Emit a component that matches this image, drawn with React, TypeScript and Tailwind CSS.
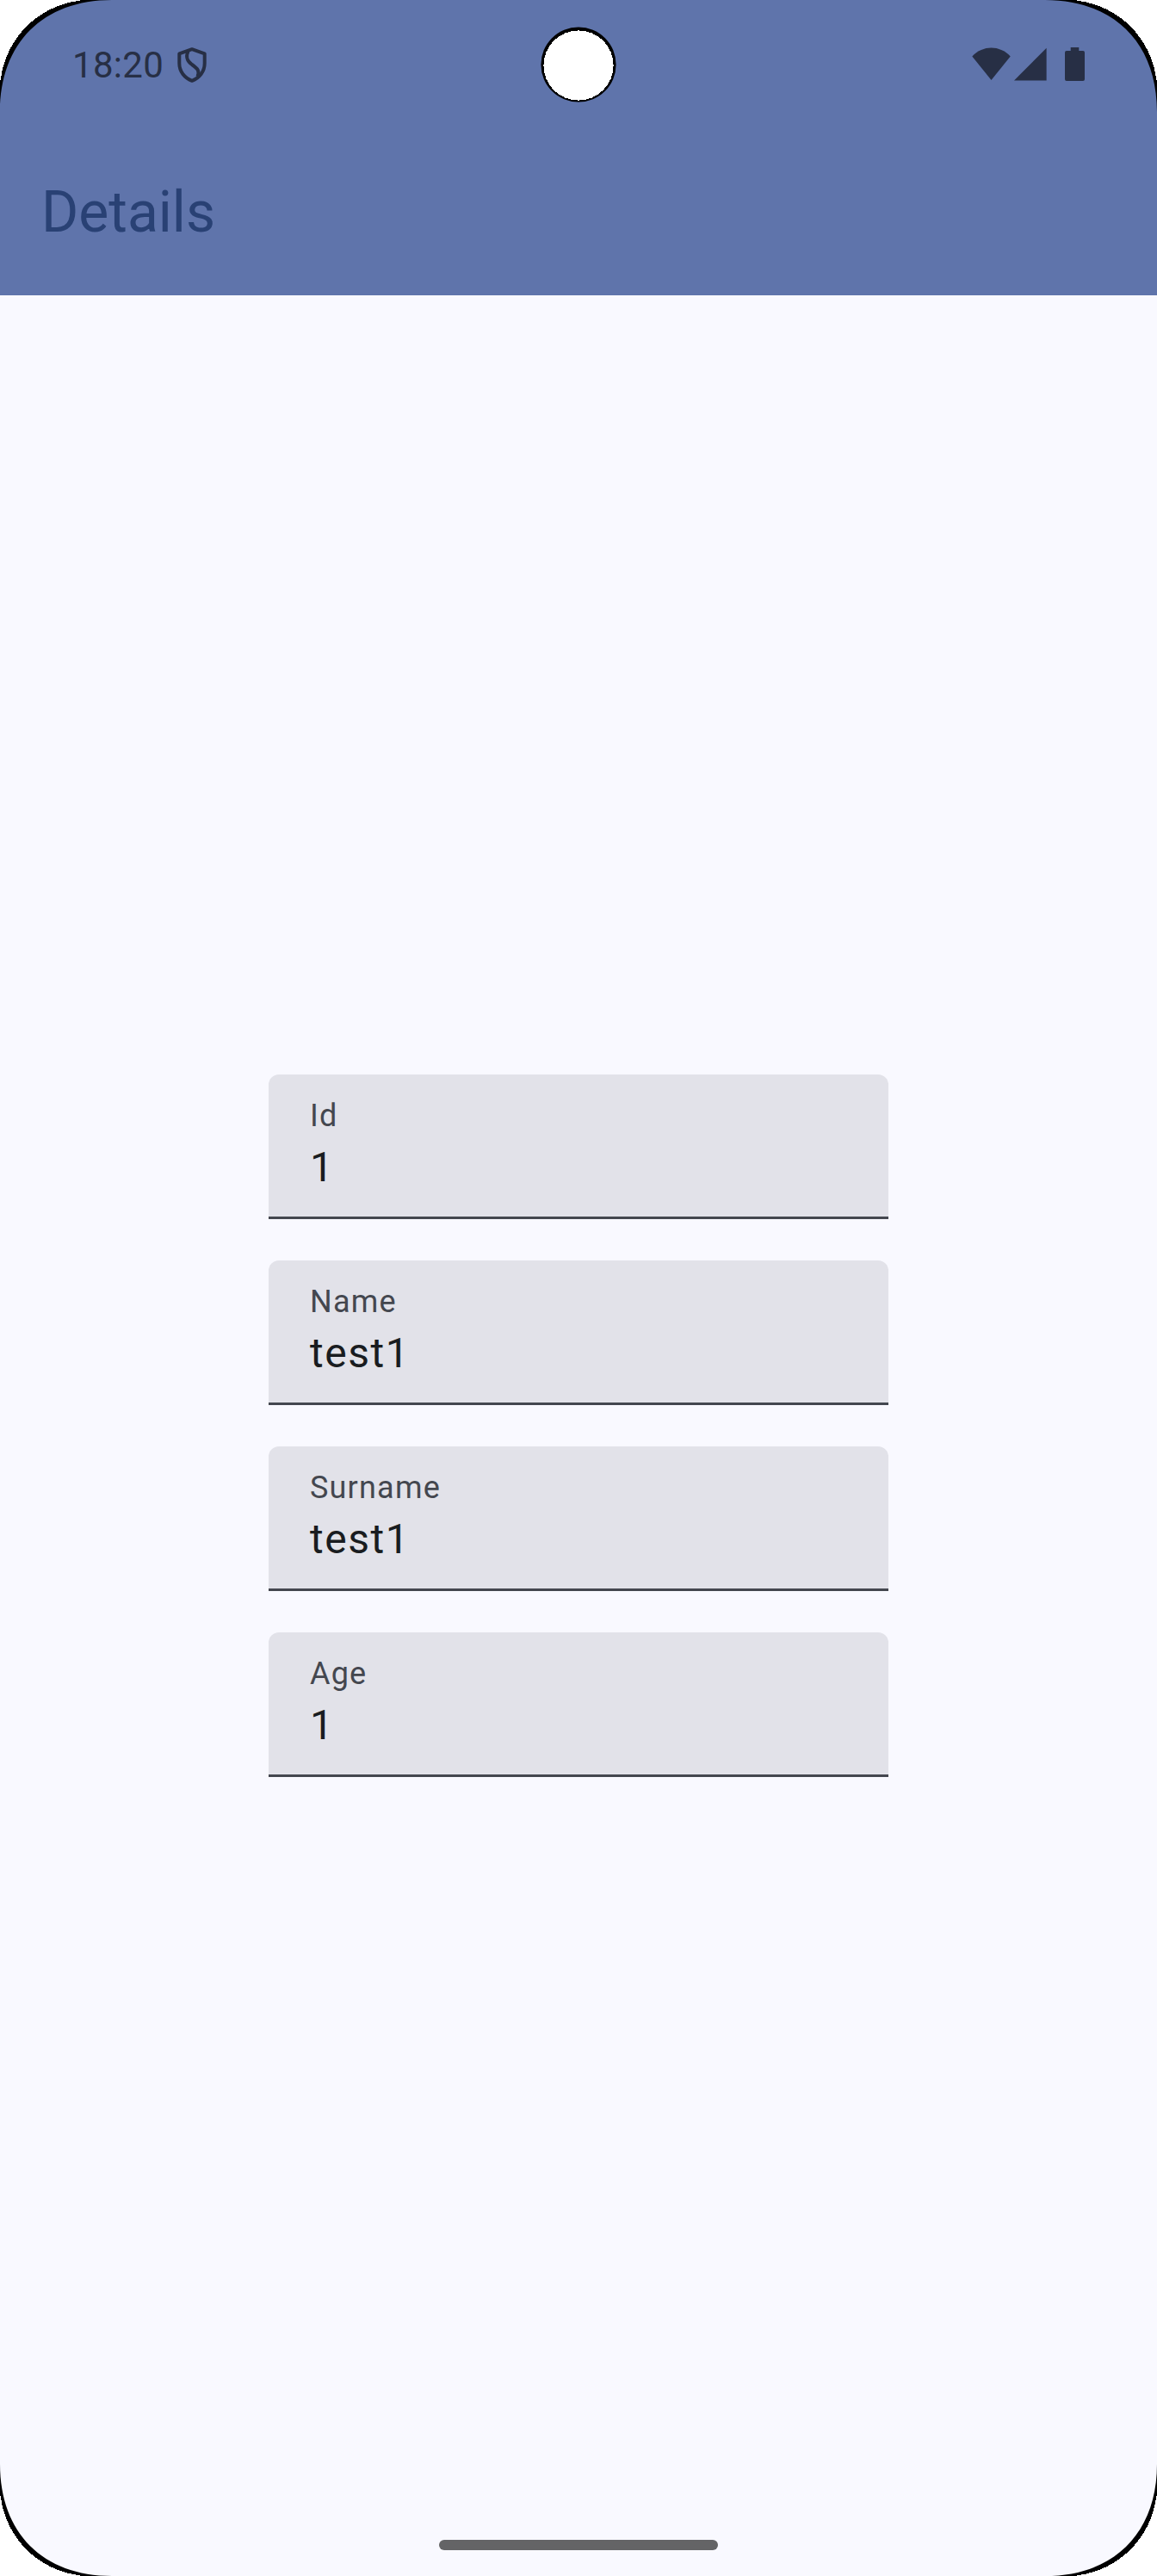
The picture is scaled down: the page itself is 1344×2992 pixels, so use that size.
const fields = [
  { label: 'Id', value: '1' },
  { label: 'Name', value: 'test1' },
  { label: 'Surname', value: 'test1' },
  { label: 'Age', value: '1' },
];

function Corner({ className }: { className: string }) {
  return (
    <svg className={`absolute size-[136px] ${className}`} viewBox="0 0 136 136" aria-hidden="true">
      <path d="M0 0H130C50 0 0 50 0 130Z" fill="#000" />
      <path d="M0 0H93V.7A105 105 0 0 0 .7 93H0Z" fill="#fff" shapeRendering="crispEdges" />
    </svg>
  );
}

function ShieldIcon() {
  return (
    <svg className="h-[42px] w-[34px]" viewBox="0 0 34 42" fill="none" stroke="#272f45" strokeWidth="4" strokeLinejoin="round" aria-hidden="true">
      <path d="M17 3.2L2.3 8.4V19.5C2.3 29 8.3 36.5 17 39.8C25.7 36.5 31.7 29 31.7 19.5V8.4Z" />
      <path d="M12.5 5.5C9.5 12 11 16.5 17 21C24 26 26 28.5 23.5 35" />
    </svg>
  );
}

function StatusIcons() {
  return (
    <svg className="h-[42px] w-[132px]" viewBox="0 0 132 42" fill="#272f45" aria-hidden="true">
      <path d="M.3 11.5C13 -1.7 32 -1.7 44.7 11.5L22.5 39Z" />
      <path d="M49 39.4L86.6 1.7V39.4Z" />
      <path d="M114.7 1H124.3V5H129Q131 5 131 7V38Q131 40 129 40H110Q108 40 108 38V7Q108 5 110 5H114.7Z" />
    </svg>
  );
}

export default function App() {
  return (
    <div className="relative flex h-[2992px] w-[1344px] flex-col overflow-hidden bg-[#f9f9ff] font-[Roboto,sans-serif]">
      <header className="flex h-[343px] flex-col bg-[#5f74ab]">
        <div className="flex h-[150px] items-center justify-between pr-[83px] pl-[84px]">
          <div className="flex items-center">
            <span className="w-[122px] pt-0.5 text-[42px] leading-[48px] tracking-[0.3px] whitespace-nowrap text-[#272f45]">18:20</span>
            <ShieldIcon />
          </div>
          <StatusIcons />
        </div>
        <h1 className="mt-[52px] pl-[48px] text-[66px] leading-[90px] font-normal text-[#294174]">Details</h1>
      </header>
      <main className="mt-[905px] flex flex-col items-center gap-12">
        {fields.map((f) => (
          <label key={f.label} className="flex h-[168px] w-[720px] flex-col rounded-t-[12px] bg-[#e2e2e9] px-12 pt-6">
            <span className="h-12 text-[36px] leading-[48px] tracking-[1.2px] text-[#44474f]">{f.label}</span>
            <span className="h-[72px] text-[48px] leading-[72px] tracking-[1.5px] text-[#191c20]">{f.value}</span>
            <span className="-mx-12 mt-auto h-[3px] bg-[#44474f]" />
          </label>
        ))}
      </main>
      <div className="mt-auto mb-[30px] h-3 w-[324px] self-center rounded-full bg-[#646466]" />
      <svg className="absolute top-[30px] left-[627px] size-[90px]" viewBox="0 0 90 90" aria-hidden="true">
        <circle cx="45" cy="45" r="43.6" fill="#000" />
        <circle cx="45" cy="46" r="40.6" fill="#fff" shapeRendering="crispEdges" />
      </svg>
      <Corner className="top-0 left-0" />
      <Corner className="top-0 right-0 -scale-x-100" />
      <Corner className="bottom-0 left-0 -scale-y-100" />
      <Corner className="right-0 bottom-0 rotate-180" />
    </div>
  );
}
